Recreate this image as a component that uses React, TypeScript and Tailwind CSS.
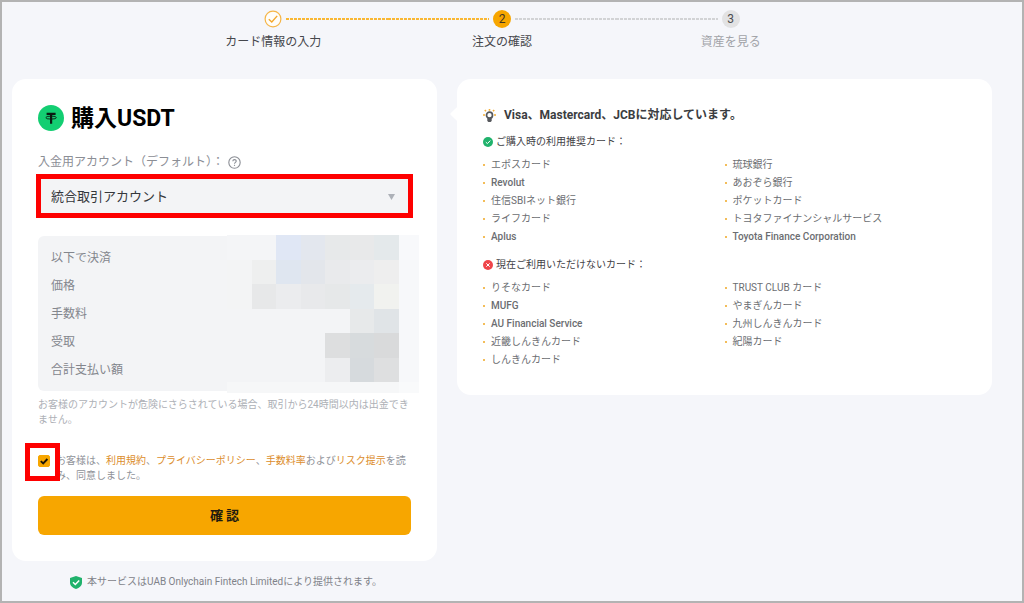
import { useState } from 'react';
import clsx from 'clsx';

const steps = [
  { label: 'カード情報の入力', status: 'done' },
  { label: '注文の確認', status: 'current' },
  { label: '資産を見る', status: 'upcoming' },
];

const summaryRows = ['以下で決済', '価格', '手数料', '受取', '合計支払い額'];

const recommendedCards = [
  ['エポスカード', 'Revolut', '住信SBIネット銀行', 'ライフカード', 'Aplus'],
  ['琉球銀行', 'あおぞら銀行', 'ポケットカード', 'トヨタファイナンシャルサービス', 'Toyota Finance Corporation'],
];

const unavailableCards = [
  ['りそなカード', 'MUFG', 'AU Financial Service', '近畿しんきんカード', 'しんきんカード'],
  ['TRUST CLUB カード', 'やまぎんカード', '九州しんきんカード', '紀陽カード'],
];

// Blocks that hide the amounts, row by row
const mosaic = [
  ['#f4f5f7', '#f4f5f7', '#e0e7f5', '#e3e7ee', '#e7e9ea', '#e8e9ea', '#e4e9eb', '#f8f9fb'],
  ['#f3f4f5', '#eeefef', '#dfe6f0', '#e3e6eb', '#e9eaec', '#ebecee', '#eeeeee', '#f7f8fa'],
  ['#f3f4f5', '#e7e8e9', '#ebecee', '#e8e9eb', '#e6e8e9', '#e5eaed', '#f1f2ef', '#f7f8fa'],
  ['#f3f4f6', '#f3f4f6', '#f3f4f6', '#f3f4f6', '#f3f4f6', '#e7e9ea', '#e0e4e7', '#f7f8fa'],
  ['#f3f4f6', '#f3f4f6', '#f3f4f6', '#f3f4f6', '#dddedf', '#d7dbdd', '#d9dadb', '#f7f8fa'],
  ['#f3f4f6', '#f3f4f6', '#f3f4f6', '#f3f4f6', '#ecedef', '#d6dadd', '#dedfe0', '#f7f8fa'],
  ['#f6f7f8', '#f6f7f8', '#f6f7f8', '#f6f7f8', '#f6f7f8', '#f6f7f8', '#f6f7f8', '#f9fafb'],
];

function StepLine({ active, hidden }: { active: boolean; hidden: boolean }) {
  return (
    <span
      className={clsx(
        'h-[2px] flex-1',
        hidden && 'invisible',
        active
          ? 'bg-[repeating-linear-gradient(90deg,#f9b733_0_3px,transparent_3px_4px)]'
          : 'bg-[repeating-linear-gradient(90deg,#d2d3d5_0_3px,transparent_3px_4px)]'
      )}
    />
  );
}

function Steps() {
  return (
    <ol className="mx-auto grid w-[70%] grid-cols-3">
      {steps.map((step, i) => (
        <li key={step.label} className="flex flex-col items-center">
          <div className="flex w-full items-center gap-1">
            <StepLine active={i <= 1} hidden={i === 0} />
            {step.status === 'done' ? (
              <svg className="size-[18px]" viewBox="0 0 18 18" fill="none" aria-hidden="true">
                <circle cx="9" cy="9" r="7.9" fill="#fffdf8" stroke="#f5b547" strokeWidth="1.2" />
                <path d="M4.8 9.2 7.8 12 13.2 5.9" stroke="#f4a72a" strokeWidth="1.4" />
              </svg>
            ) : (
              <span
                className={clsx(
                  'flex size-[18px] items-center justify-center rounded-full text-[12px] leading-none',
                  step.status === 'current' ? 'bg-[#f7a600] text-[#3d3524]' : 'bg-[#e2e2e3] text-[#4c4d50]'
                )}
              >
                {i + 1}
              </span>
            )}
            <StepLine active={i === 0} hidden={i === 2} />
          </div>
          <span
            className={clsx(
              'mt-[5px] text-[12px] leading-[18px] whitespace-nowrap',
              step.status === 'upcoming' ? 'text-[#a1a3a8]' : 'text-[#45474c]'
            )}
          >
            {step.label}
          </span>
        </li>
      ))}
    </ol>
  );
}

function CardList({ columns }: { columns: string[][] }) {
  return (
    <div className="mt-[5px] grid grid-cols-2">
      {columns.map((column, i) => (
        <ul key={i} className="text-[10px] leading-[18px] text-[#6b6d71]">
          {column.map((name) => (
            <li key={name} className="flex items-center gap-[6px]">
              <span className="size-[2px] bg-[#f3bd59]" />
              <span className={clsx(/^[A-Za-z ]+$/.test(name) && 'font-medium')}>{name}</span>
            </li>
          ))}
        </ul>
      ))}
    </div>
  );
}

function PurchaseCard() {
  const [agreed, setAgreed] = useState(true);

  return (
    <section className="rounded-[14px] bg-white px-[26px] py-[26px]">
      <h1 className="flex h-[26px] items-center gap-[7px] text-[23px] leading-[26px] font-bold text-black">
        <svg className="size-[26px]" viewBox="0 0 26 26" fill="none" aria-hidden="true">
          <circle cx="13" cy="13" r="13" fill="#13ce72" />
          <path d="M8.6 8.9h9M13.1 8.9v9.8" stroke="#0b1a12" strokeWidth="2.2" />
          <ellipse cx="13.1" cy="12.6" rx="5.3" ry="1.5" stroke="#0b1a12" strokeWidth="0.9" />
        </svg>
        <span className="pt-[2px]">購入USDT</span>
      </h1>

      <div className="mt-[22px] flex items-center gap-1 text-[12px] leading-[18px] text-[#8b8e95]">
        <label htmlFor="account" className="whitespace-nowrap">入金用アカウント（デフォルト）：</label>
        <button type="button" aria-label="ヘルプ">
          <svg className="size-[13px]" viewBox="0 0 13 13" fill="none" stroke="#8b8e95" aria-hidden="true">
            <circle cx="6.5" cy="6.5" r="5.7" strokeWidth="1.1" />
            <path d="M4.8 5.2c.1-2.2 3.5-2.1 3.4 0-.1 1.1-1.7 1.2-1.7 2.6" strokeWidth="1.1" />
            <path d="M6.5 8.8v1.1" strokeWidth="1.1" />
          </svg>
        </button>
      </div>

      <div className="relative mt-[5px]">
        <select
          id="account"
          className="block h-10 w-full appearance-none rounded-md bg-[#f3f4f6] px-[13px] pt-[2px] text-[13px] text-[#35373b]"
        >
          <option>統合取引アカウント</option>
        </select>
        <svg className="pointer-events-none absolute top-[18px] right-4 h-[6px] w-[7px]" viewBox="0 0 7 6" aria-hidden="true">
          <path d="M0 0h7L3.5 6z" fill="#adb1b8" />
        </svg>
        <span className="pointer-events-none absolute -inset-[2px] border-[5px] border-[#fe0000]" />
      </div>

      <div className="relative mt-5 rounded-md bg-[#f3f4f6] px-[13px] pt-2 pb-[7px]">
        <ul className="text-[12px] leading-[28px] text-[#83868d]">
          {summaryRows.map((row) => (
            <li key={row}>{row}</li>
          ))}
        </ul>
        <div className="absolute -top-px -right-2 -bottom-[2px] grid w-48 grid-cols-[repeat(7,1fr)_20px] grid-rows-[repeat(6,1fr)_11px]">
          {mosaic.flat().map((color, i) => (
            <span key={i} style={{ backgroundColor: color }} />
          ))}
        </div>
      </div>

      <p className="mt-[6px] text-[10px] leading-[15px] text-[#adb0b6]">
        お客様のアカウントが危険にさらされている場合、取引から24時間以内は出金できません。
      </p>

      <div className="mt-[26px] flex items-start gap-[6px]">
        <div className="relative mt-[2px] size-3 shrink-0">
          <input
            id="agree"
            type="checkbox"
            checked={agreed}
            onChange={(e) => setAgreed(e.target.checked)}
            className="block size-3 appearance-none rounded-[2px] border border-[#f7a600] bg-white checked:bg-[#f7a600]"
          />
          {agreed && (
            <svg className="pointer-events-none absolute inset-0 size-3" viewBox="0 0 12 12" fill="none" aria-hidden="true">
              <path d="M2.8 6.1 5.2 8.4 9.4 4" stroke="#1b1608" strokeWidth="1.9" />
            </svg>
          )}
          <span className="pointer-events-none absolute -top-3 -left-[13px] z-10 h-[38px] w-[35px] border-[5px] border-[#fe0000]" />
        </div>
        <label htmlFor="agree" className="text-[10px] leading-[15px] text-[#8f9299]">
          <span>お客様は、</span>
          <a href="#terms" className="text-[#dc8d2c]">利用規約</a>
          <span>、</span>
          <a href="#privacy" className="text-[#dc8d2c]">プライバシーポリシー</a>
          <span>、</span>
          <a href="#fees" className="text-[#dc8d2c]">手数料率</a>
          <span>および</span>
          <a href="#risk" className="text-[#dc8d2c]">リスク提示</a>
          <span>を読み、同意しました。</span>
        </label>
      </div>

      <button type="button" className="mt-[13px] h-[39px] w-full rounded-md bg-[#f7a600] text-[13px] font-bold text-[#1d1a10]">
        確 認
      </button>
    </section>
  );
}

function SupportedCards() {
  return (
    <aside className="relative rounded-[14px] bg-white px-[26px] pt-[27px] pb-[26px]">
      <span className="absolute top-[30px] -left-[5px] size-[10px] rotate-45 rounded-[1px] bg-white" />
      <h2 className="flex items-center gap-2 text-[12px] leading-[18px] font-bold text-[#3b3d41]">
        <svg className="size-[13px]" viewBox="0 0 13 13" fill="none" aria-hidden="true">
          <path
            d="M6.5 0v1.8M1.8 1 3 2.3M11.2 1 10 2.3M0 6h2M11 6h2"
            stroke="#f5b03a"
            strokeWidth="1.6"
          />
          <circle cx="6.5" cy="6.2" r="3" stroke="#56585c" strokeWidth="1.7" />
          <path d="M4.3 8.8h4.4v3.2l-1.1 1H5.4l-1.1-1z" fill="#56585c" />
        </svg>
        Visa、Mastercard、JCBに対応しています。
      </h2>

      <h3 className="mt-[9px] flex items-center gap-[3px] text-[10px] leading-[18px] text-[#3f4145]">
        <svg className="size-[10px]" viewBox="0 0 10 10" fill="none" aria-hidden="true">
          <circle cx="5" cy="5" r="5" fill="#20b26c" />
          <path d="M2.8 5.1 4.4 6.6 7.3 3.6" stroke="#fff" />
        </svg>
        ご購入時の利用推奨カード：
      </h3>
      <CardList columns={recommendedCards} />

      <h3 className="mt-[10px] flex items-center gap-[3px] text-[10px] leading-[18px] text-[#3f4145]">
        <svg className="size-[10px]" viewBox="0 0 10 10" fill="none" aria-hidden="true">
          <circle cx="5" cy="5" r="5" fill="#ef454a" />
          <path d="m3.3 3.3 3.4 3.4M6.7 3.3 3.3 6.7" stroke="#fff" />
        </svg>
        現在ご利用いただけないカード：
      </h3>
      <CardList columns={unavailableCards} />
    </aside>
  );
}

export default function App() {
  return (
    <main className="min-h-screen border-2 border-[#b3b3b3] bg-[#f5f6fa] pt-2 pr-[30px] pl-[10px] font-['Roboto','Noto_Sans_CJK_JP',sans-serif]">
      <Steps />

      <div className="mt-[28px] grid grid-cols-[425fr_535fr] items-start gap-5">
        <div>
          <PurchaseCard />
          <p className="mt-3 flex items-center gap-[5px] pl-[58px] text-[10px] leading-[18px] text-[#7f8289]">
            <svg className="h-[13px] w-3" viewBox="0 0 12 13" fill="none" aria-hidden="true">
              <path d="M6 0 12 2v4.6c0 3.2-2.6 5.3-6 6.4-3.4-1.1-6-3.2-6-6.4V2z" fill="#20b26c" />
              <path d="M3 6.3 5.3 8.5 9.2 4.5" stroke="#fff" strokeWidth="1.5" />
            </svg>
            本サービスはUAB Onlychain Fintech Limitedにより提供されます。
          </p>
        </div>

        <SupportedCards />
      </div>
    </main>
  );
}
